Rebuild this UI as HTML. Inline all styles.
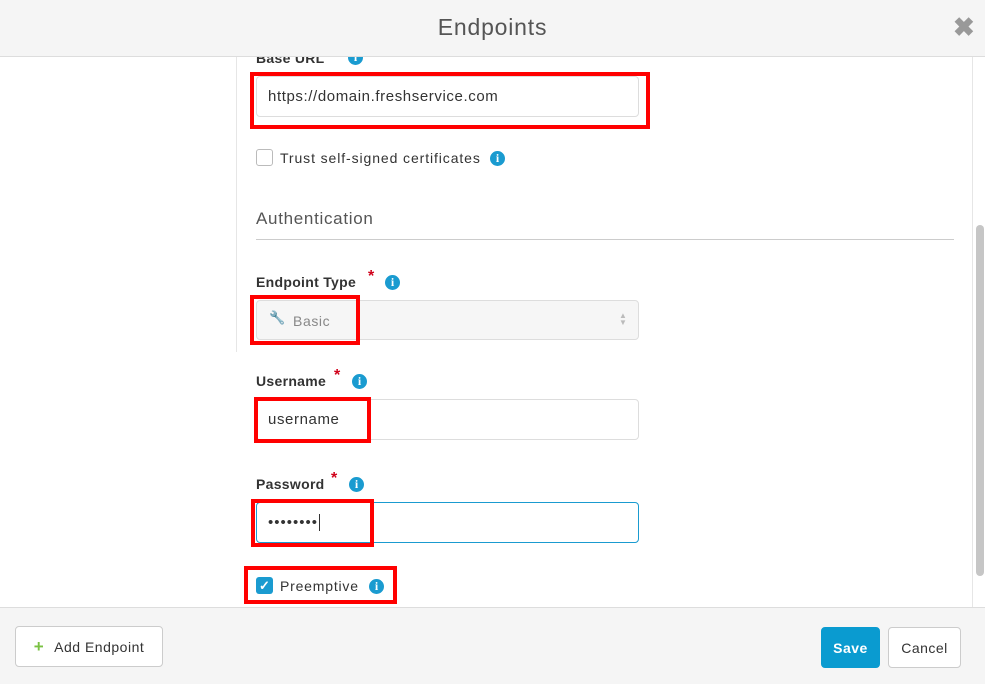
<!DOCTYPE html>
<html><head><style>
*{box-sizing:border-box;margin:0;padding:0}
body{width:985px;height:684px;position:relative;overflow:hidden;background:#fff;font-family:"Liberation Sans",sans-serif;color:#333}
.a{position:absolute;white-space:nowrap}
.hdr{left:0;top:0;width:985px;height:57px;background:#f5f5f5;border-bottom:1px solid #ddd}
.title{left:0;width:985px;top:14px;text-align:center;font-size:23px;color:#555;letter-spacing:0.8px}
.lbl{font-size:14px;font-weight:bold;color:#333;letter-spacing:0.3px}
.inp{border:1px solid #ddd;border-radius:4px;background:#fff;font-size:15px;color:#333;padding-left:11px;line-height:40px;height:41px;letter-spacing:0.6px}
.red{border:4px solid #f00}
.info{width:15px;height:15px;border-radius:50%;background:#1a9bd0;color:#fff;font-size:12px;font-weight:bold;text-align:center;line-height:15px;font-family:"Liberation Serif",serif}
.star{color:#d0021b;font-size:16px;font-weight:bold}
.foot{left:0;top:607px;width:985px;height:77px;background:#f5f5f5;border-top:1px solid #ddd}
.btn{border:1px solid #ccc;border-radius:4px;background:#fff;font-size:15px;text-align:center;line-height:40px;height:41px;color:#333;letter-spacing:0.5px}
</style></head><body>
<div class="a" style="left:236px;top:57px;width:1px;height:295px;background:#e6e6e6"></div>
<div class="a" style="left:972px;top:57px;width:1px;height:550px;background:#e6e6e6"></div>
<div class="a" style="left:976px;top:225px;width:8px;height:351px;border-radius:4px;background:#c6c6c6"></div>

<div class="a lbl" style="left:256px;top:50px">Base URL</div>
<div class="a info" style="left:348px;top:50px">i</div>
<div class="a hdr"></div>
<div class="a title">Endpoints</div>
<div class="a" style="left:953px;top:12px;font-size:26px;color:#999;font-weight:bold">✖</div>

<div class="a inp" style="left:256px;top:76px;width:383px">https://domain.freshservice.com</div>
<div class="a red" style="left:250px;top:72px;width:400px;height:57px"></div>

<div class="a" style="left:256px;top:149px;width:17px;height:17px;border:1px solid #bbb;border-radius:3px"></div>
<div class="a" style="left:280px;top:150px;font-size:14px;letter-spacing:0.9px">Trust self-signed certificates</div>
<div class="a info" style="left:490px;top:151px">i</div>

<div class="a" style="left:256px;top:209px;font-size:17px;color:#555;letter-spacing:0.7px">Authentication</div>
<div class="a" style="left:256px;top:239px;width:698px;height:1px;background:#ccc"></div>

<div class="a lbl" style="left:256px;top:274px">Endpoint Type</div>
<div class="a star" style="left:368px;top:268px">*</div>
<div class="a info" style="left:385px;top:275px">i</div>
<div class="a inp" style="left:256px;top:300px;width:383px;height:40px;background:#f6f6f6;color:#888;padding-left:36px;font-size:14px">Basic</div>
<div class="a" style="left:269px;top:310px;font-size:13px;color:#777">🔧</div>
<div class="a" style="left:619px;top:312px;font-size:8px;color:#bbb;line-height:7px">▲<br>▼</div>
<div class="a red" style="left:250px;top:295px;width:110px;height:50px"></div>

<div class="a lbl" style="left:256px;top:373px">Username</div>
<div class="a star" style="left:334px;top:367px">*</div>
<div class="a info" style="left:352px;top:374px">i</div>
<div class="a inp" style="left:256px;top:399px;width:383px">username</div>
<div class="a red" style="left:254px;top:397px;width:117px;height:46px"></div>

<div class="a lbl" style="left:256px;top:476px">Password</div>
<div class="a star" style="left:331px;top:470px">*</div>
<div class="a info" style="left:349px;top:477px">i</div>
<div class="a inp" style="left:256px;top:502px;width:383px;border-color:#1a9bd0;letter-spacing:1px">••••••••<span style="border-left:1px solid #333;margin-left:1px"></span></div>
<div class="a red" style="left:251px;top:499px;width:123px;height:48px"></div>

<div class="a" style="left:256px;top:577px;width:17px;height:17px;border-radius:3px;background:#1a9bd0;color:#fff;font-size:13px;text-align:center;line-height:17px;font-weight:bold">✓</div>
<div class="a" style="left:280px;top:578px;font-size:14px;letter-spacing:0.8px">Preemptive</div>
<div class="a info" style="left:369px;top:579px">i</div>
<div class="a red" style="left:244px;top:566px;width:153px;height:38px"></div>

<div class="a foot"></div>
<div class="a btn" style="left:15px;top:626px;width:148px;font-size:14px"><span style="color:#7ac143;font-weight:bold;font-size:17px;margin-right:10px">+</span>Add Endpoint</div>
<div class="a btn" style="left:821px;top:627px;width:59px;background:#0a9bd0;border-color:#0a9bd0;color:#fff;font-weight:bold;font-size:14px">Save</div>
<div class="a btn" style="left:888px;top:627px;width:73px;font-size:14px">Cancel</div>
</body></html>
